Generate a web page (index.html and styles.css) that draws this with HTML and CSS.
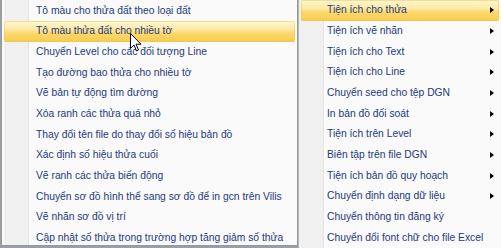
FILE: index.html
```html
<!DOCTYPE html>
<html lang="vi">
<head>
<meta charset="utf-8">
<link rel="stylesheet" href="styles.css">
</head>
<body>
<div class="stage">
  <div class="menu menu-left">
    <div class="item">Tô màu cho thửa đất theo loại đất</div>
    <div class="item active">Tô màu thửa đất cho nhiều tờ</div>
    <div class="item">Chuyển Level cho các đối tượng Line</div>
    <div class="item">Tạo đường bao thửa cho nhiều tờ</div>
    <div class="item">Vẽ bản tự động tìm đường</div>
    <div class="item">Xóa ranh các thửa quá nhỏ</div>
    <div class="item">Thay đổi tên file do thay đổi số hiệu bản đồ</div>
    <div class="item">Xác định số hiệu thửa cuối</div>
    <div class="item">Vẽ ranh các thửa biến động</div>
    <div class="item">Chuyển sơ đồ hình thể sang sơ đồ để in gcn trên Vilis</div>
    <div class="item">Vẽ nhãn sơ đồ vị trí</div>
    <div class="item">Cập nhật số thửa trong trường hợp tăng giảm số thửa</div>
  </div>
  <div class="menu menu-right">
    <div class="item sub active">Tiện ích cho thửa</div>
    <div class="item sub">Tiện ích vẽ nhãn</div>
    <div class="item sub">Tiện ích cho Text</div>
    <div class="item sub">Tiện ích cho Line</div>
    <div class="item sub">Chuyển seed cho tệp DGN</div>
    <div class="item sub">In bản đồ đối soát</div>
    <div class="item sub">Tiện ích trên Level</div>
    <div class="item sub">Biên tập trên file DGN</div>
    <div class="item sub">Tiện ích bản đồ quy hoạch</div>
    <div class="item sub">Chuyển định dạng dữ liệu</div>
    <div class="item">Chuyển thông tin đăng ký</div>
    <div class="item">Chuyển đổi font chữ cho file Excel</div>
  </div>
  <svg class="cursor" width="12" height="19" viewBox="0 0 12 19">
    <path d="M0.5 0.5 L0.5 15.5 L4 12 L6.5 18 L8.5 17 L6 11.2 L11 11.2 Z" fill="#fff" stroke="#000" stroke-width="1" stroke-linejoin="miter"/>
  </svg>
</div>
</body>
</html>
```
FILE: styles.css
```css
html, body {
  margin: 0;
  padding: 0;
}
body {
  width: 501px;
  height: 248px;
  overflow: hidden;
  background: #9aa0a8;
  font-family: "Liberation Sans", Arial, sans-serif;
}
.stage {
  position: relative;
  display: flex;
  align-items: flex-start;
  height: 248px;
}
.menu {
  background: linear-gradient(to right, #f0f0f0 0, #f0f0f0 24px, #e2e3e3 24px, #e2e3e3 25px, #ffffff 25px, #ffffff 26px, #fafafa 26px);
  box-sizing: border-box;
  padding: 0 2px 1px 2px;
  margin-top: -1px;
  color: #22397f;
  font-size: 10.3px;
}
.menu-left {
  width: 297px;
  margin-left: 1px;
  border: 1px solid #979797;
  border-top: none;
  padding-left: 2px;
  padding-top: 1.6px;
  height: 247px;
  background-position: 2px 0;
  background-repeat: no-repeat;
  background-color: #fafafa;
}
.menu-right {
  width: 203px;
  height: 260px;
  padding-top: 1.2px;
  border-left: 1px solid #b5b5b5;
  background-position: 0 0;
}
.item {
  height: 20.7px;
  line-height: 20.7px;
  padding-left: 32px;
  white-space: nowrap;
  position: relative;
  box-sizing: border-box;
  border-radius: 2px;
}
.menu-right .item {
  padding-left: 26px;
}
.item.active {
  background: linear-gradient(#fff8d8 0%, #fde9a2 40%, #fcd76a 60%, #fbcf55 90%, #f4c04a 100%);
  box-shadow: inset 0 0 0 1px rgba(242, 202, 88, 0.6);
}
.item.sub::after {
  content: "";
  position: absolute;
  right: 5px;
  top: 7px;
  border-style: solid;
  border-width: 3.5px 0 3.5px 4px;
  border-color: transparent transparent transparent #000;
}
.cursor {
  position: absolute;
  left: 130px;
  top: 33px;
}
```
